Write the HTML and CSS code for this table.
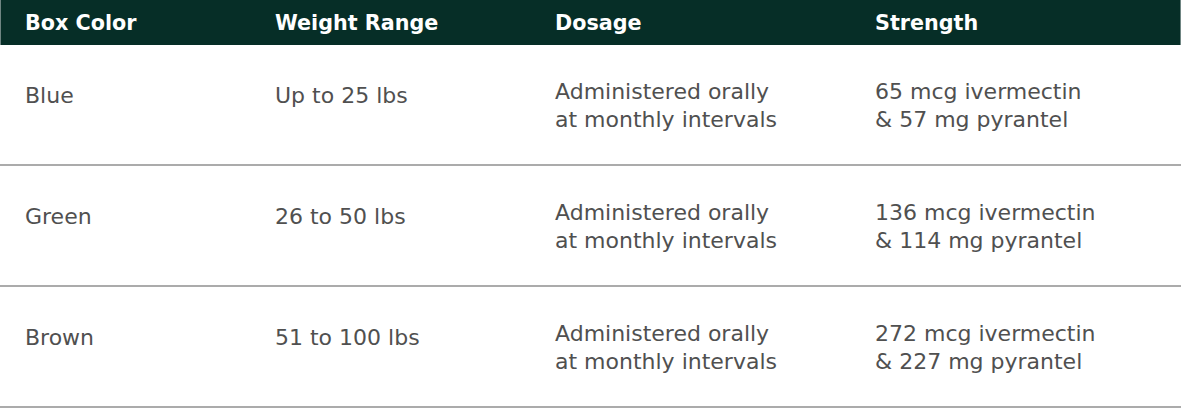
FILE: index.html
```html
<!DOCTYPE html>
<html lang="en">
<head>
<meta charset="utf-8">
<title>Dosage table</title>
<link rel="stylesheet" href="styles.css">
</head>
<body>
<div class="table">
  <div class="row head">
    <div class="cell">Box Color</div>
    <div class="cell">Weight Range</div>
    <div class="cell">Dosage</div>
    <div class="cell">Strength</div>
  </div>
  <div class="row body">
    <div class="cell single">Blue</div>
    <div class="cell single">Up to 25 lbs</div>
    <div class="cell multi">Administered orally<br>at monthly intervals</div>
    <div class="cell multi">65 mcg ivermectin<br>&amp; 57 mg pyrantel</div>
  </div>
  <div class="row body">
    <div class="cell single">Green</div>
    <div class="cell single">26 to 50 lbs</div>
    <div class="cell multi">Administered orally<br>at monthly intervals</div>
    <div class="cell multi">136 mcg ivermectin<br>&amp; 114 mg pyrantel</div>
  </div>
  <div class="row body">
    <div class="cell single">Brown</div>
    <div class="cell single">51 to 100 lbs</div>
    <div class="cell multi">Administered orally<br>at monthly intervals</div>
    <div class="cell multi">272 mcg ivermectin<br>&amp; 227 mg pyrantel</div>
  </div>
</div>
</body>
</html>
```
FILE: styles.css
```css
html, body {
  margin: 0;
  padding: 0;
  background: #ffffff;
}

.table {
  width: 1181px;
  font-family: "DejaVu Sans", "Liberation Sans", sans-serif;
}

.row {
  display: grid;
  grid-template-columns: 250px 280px 320px 1fr;
  padding-left: 25px;
  box-sizing: border-box;
}

.head {
  height: 45px;
  align-items: center;
  background: #062e27;
  color: #ffffff;
  font-weight: bold;
  font-size: 20.7px;
  border-left: 1px solid #6f8582;
  border-right: 1px solid #6f8582;
  padding-left: 24px;
}

.body {
  height: 121px;
  border-bottom: 2px solid #ababab;
  color: #505050;
  font-size: 22px;
  line-height: 28px;
  align-items: start;
}

.single {
  padding-top: 37px;
}

.multi {
  padding-top: 33px;
}
```
